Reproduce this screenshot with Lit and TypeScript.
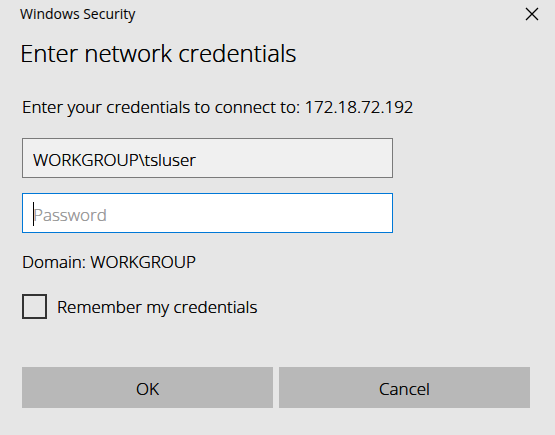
import { LitElement, html, css } from "lit";
import { customElement, state } from "lit/decorators.js";

@customElement("app-root")
export class AppRoot extends LitElement {
  @state() private user = "WORKGROUP\\tsluser";

  static styles = css`
    :host {
      display: block;
      min-height: 100vh;
      box-sizing: border-box;
      background: #e6e6e6;
      color: #000;
      font-family: "Open Sans", "Noto Sans", sans-serif;
      font-size: 17px;
      font-weight: 300;
      line-height: 24px;
    }
    *, *::before { box-sizing: border-box; }
    .top { padding-left: 20px; }
    .titlebar {
      display: flex;
      justify-content: space-between;
      align-items: center;
      height: 28px;
      font-size: 14px;
      font-weight: 400;
    }
    .close {
      width: 46px;
      height: 28px;
      padding: 0;
      border: 0;
      background: none;
    }
    .close svg { display: block; margin: auto; }
    /* Deepens the light weight without widening it. */
    h1, .body, .field, .action { text-shadow: 0 0 currentColor; }
    h1 {
      margin: 8px 0 25px;
      font-size: 24px;
      line-height: 34px;
      font-weight: 300;
    }
    .body { padding: 0 25px 27px 22px; }
    p { margin: 0; }
    .fields {
      display: grid;
      gap: 15px;
      width: 73%;
      margin: 19px 0 17px;
    }
    .slot { position: relative; }
    .caret::before {
      content: "";
      position: absolute;
      left: 11px;
      top: 9px;
      width: 1px;
      height: 24px;
      background: #000;
    }
    .field {
      display: block;
      width: 100%;
      height: 40px;
      padding: 2px 10px 0;
      border: 1px solid #7a7a7a;
      border-radius: 0;
      outline: none;
      background: #f0f0f0;
      color: #000;
      font: inherit;
    }
    .password { border-color: #0078d7; background: #fff; }
    .password::placeholder { color: #999; opacity: 1; }
    .remember {
      display: flex;
      align-items: center;
      gap: 10px;
      margin-top: 20px;
    }
    .box {
      appearance: none;
      width: 25px;
      height: 25px;
      margin: 0;
      border: 2px solid #333;
      background: transparent;
    }
    .actions {
      display: grid;
      grid-template-columns: 1fr 1fr;
      gap: 6px;
      margin-top: 48px;
    }
    .action {
      height: 41px;
      padding: 2px 0 0;
      border: 0;
      background: #b8b8b8;
      color: #000;
      font: inherit;
    }
  `;

  render() {
    return html`
      <header class="top">
        <div class="titlebar">
          <span>Windows Security</span>
          <button class="close" aria-label="Close">
            <svg width="14" height="14" viewBox="0 0 14 14" fill="none" stroke="#000" stroke-width="1.3">
              <path d="M1 1 13 13M13 1 1 13" />
            </svg>
          </button>
        </div>
        <h1>Enter network credentials</h1>
      </header>
      <form class="body">
        <p>Enter your credentials to connect to: 172.18.72.192</p>
        <div class="fields">
          <div class="slot">
            <input class="field" aria-label="User name" .value=${this.user} />
          </div>
          <div class="slot caret">
            <input class="field password" type="password" placeholder="Password" aria-label="Password" />
          </div>
        </div>
        <p>Domain: WORKGROUP</p>
        <label class="remember"><input class="box" type="checkbox" />Remember my credentials</label>
        <div class="actions">
          <button class="action" type="submit">OK</button>
          <button class="action" type="button">Cancel</button>
        </div>
      </form>
    `;
  }
}
